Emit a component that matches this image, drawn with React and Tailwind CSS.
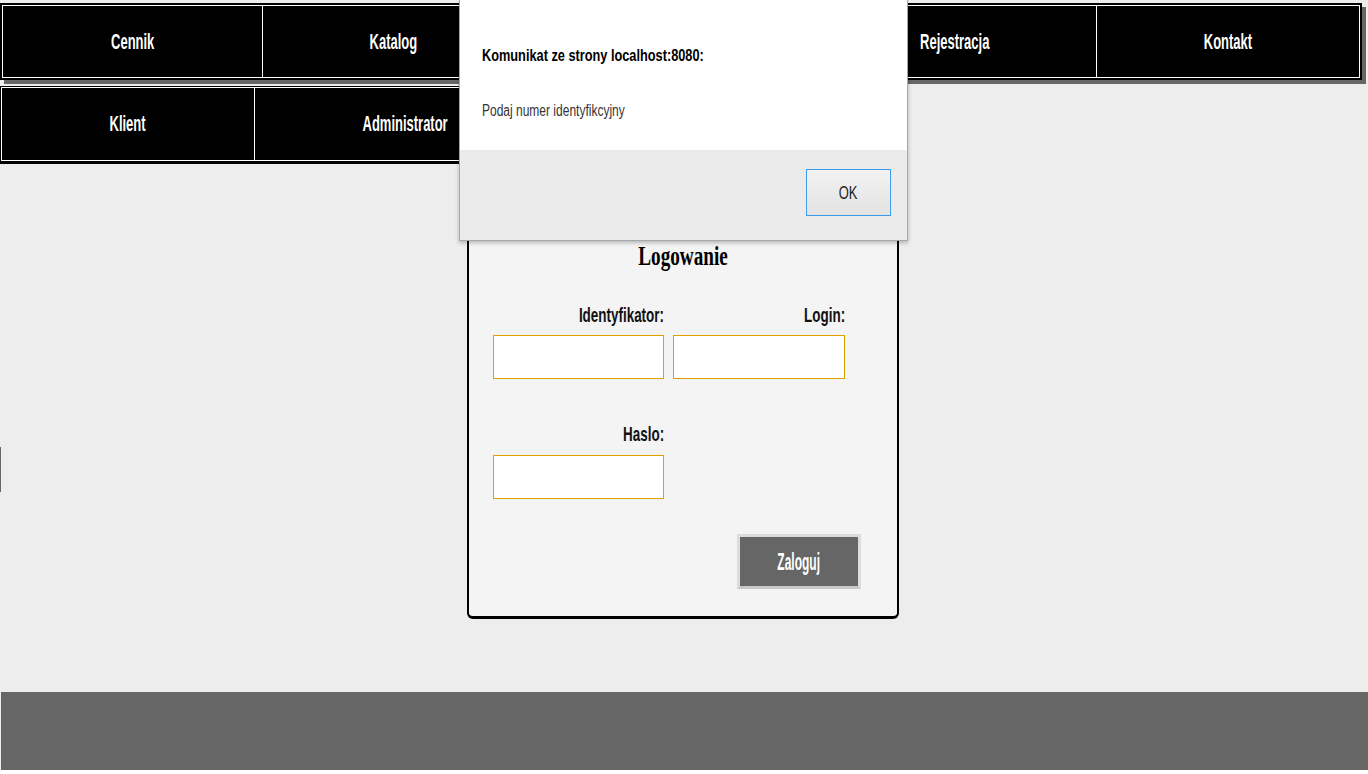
import React from "react";

const sans = { fontFamily: '"Liberation Sans", Arial, sans-serif' };

function NavCell({ w, label, last }) {
  return (
    <div
      className={`${w} h-full flex items-center justify-center ${last ? "" : "border-r border-white"}`}
    >
      {label ? (
        <span className="inline-block scale-x-[0.59] text-[22px] font-bold text-white leading-none">
          {label}
        </span>
      ) : null}
    </div>
  );
}

export default function App() {
  return (
    <div
      className="relative h-[774px] w-[1368px] overflow-hidden bg-[#ededed] flex flex-col"
      style={sans}
    >
      {/* nav row 1 */}
      <div className="mt-[3px] w-[1362px] bg-black p-[2px] shadow-[4px_4px_0_#666]">
        <div className="flex h-[73px] border border-white">
          <NavCell w="w-[260px]" label="Cennik" />
          <NavCell w="w-[262px]" label="Katalog" />
          <NavCell w="w-[288px]" label="" />
          <NavCell w="w-[284px]" label="Rejestracja" />
          <NavCell w="flex-1" label="Kontakt" last />
        </div>
      </div>
      {/* nav row 2 */}
      <div className="mt-[6px] w-[557px] bg-black pt-[1px] px-[1px] pb-[3px]">
        <div className="flex h-[74px] border border-white">
          <NavCell w="w-[253px]" label="Klient" />
          <NavCell w="flex-1" label="Administrator" last />
        </div>
      </div>

      {/* login card */}
      <div className="ml-[467px] mt-[34px] w-[432px] h-[421px] rounded-b-[6px] border-x-2 border-b-[3px] border-black bg-[#f4f4f4] pl-[24px] pr-[24px]">
        <div className="pt-[45px] text-center">
          <span
            className="inline-block scale-x-[0.71] text-[27px] font-bold text-black leading-none"
            style={{ fontFamily: '"Liberation Serif", "Times New Roman", serif' }}
          >
            Logowanie
          </span>
        </div>
        <div className="mt-[32px] grid grid-cols-[171px_172px] gap-x-[9px]">
          <div className="flex flex-col">
            <div className="h-[20px] flex justify-end items-center">
              <span className="inline-block origin-right scale-x-[0.64] text-[21px] font-bold text-[#111] leading-none">
                Identyfikator:
              </span>
            </div>
            <div className="mt-[11px] h-[44px] border border-[#e0a000] bg-white" />
          </div>
          <div className="flex flex-col">
            <div className="h-[20px] flex justify-end items-center">
              <span className="inline-block origin-right scale-x-[0.64] text-[21px] font-bold text-[#111] leading-none">
                Login:
              </span>
            </div>
            <div className="mt-[11px] h-[44px] border border-[#e0a000] bg-white" />
          </div>
          <div className="flex flex-col mt-[44px]">
            <div className="h-[20px] flex justify-end items-center">
              <span className="inline-block origin-right scale-x-[0.64] text-[21px] font-bold text-[#111] leading-none">
                Haslo:
              </span>
            </div>
            <div className="mt-[12px] h-[44px] border border-[#e0a000] bg-white" />
          </div>
        </div>
        <div className="mt-[35px] flex justify-end pr-[12px]">
          <div className="w-[124px] h-[55px] border-[3px] border-[#dcdcdc] border-b-[#c8c8c8] bg-[#666] flex items-center justify-center">
            <span className="inline-block scale-x-[0.5] text-[24px] font-bold text-white leading-none">
              Zaloguj
            </span>
          </div>
        </div>
      </div>

      {/* left edge artifacts */}
      <div className="absolute left-0 top-[447px] w-[1px] h-[45px] bg-[#666]" />

      {/* footer */}
      <div className="mt-auto ml-[1px] h-[78px] bg-[#666]" />
      <div className="h-[4px] bg-white" />

      {/* alert dialog */}
      <div className="absolute left-[459px] top-0 w-[449px] h-[241px] border-x border-b border-[#a8a8a8] bg-white shadow-[0_2px_4px_rgba(0,0,0,0.25)] flex flex-col">
        <div className="h-[150px] px-[22px]">
          <div className="pt-[44px]">
            <span className="inline-block origin-left scale-x-[0.75] text-[17px] font-bold text-black leading-none whitespace-nowrap">
              Komunikat ze strony localhost:8080:
            </span>
          </div>
          <div className="pt-[31px]">
            <span className="inline-block origin-left scale-x-[0.75] text-[16px] text-[#333] leading-none whitespace-nowrap">
              Podaj numer identyfikcyjny
            </span>
          </div>
        </div>
        <div className="flex-1 bg-[#ebebeb] flex justify-end items-start pt-[19px] pr-[16px]">
          <div className="w-[85px] h-[47px] border border-[#3c9cf0] bg-gradient-to-b from-[#f2f2f2] to-[#e3e3e3] flex items-center justify-center">
            <span className="inline-block scale-x-[0.72] text-[18px] text-[#222] leading-none">
              OK
            </span>
          </div>
        </div>
      </div>
    </div>
  );
}
